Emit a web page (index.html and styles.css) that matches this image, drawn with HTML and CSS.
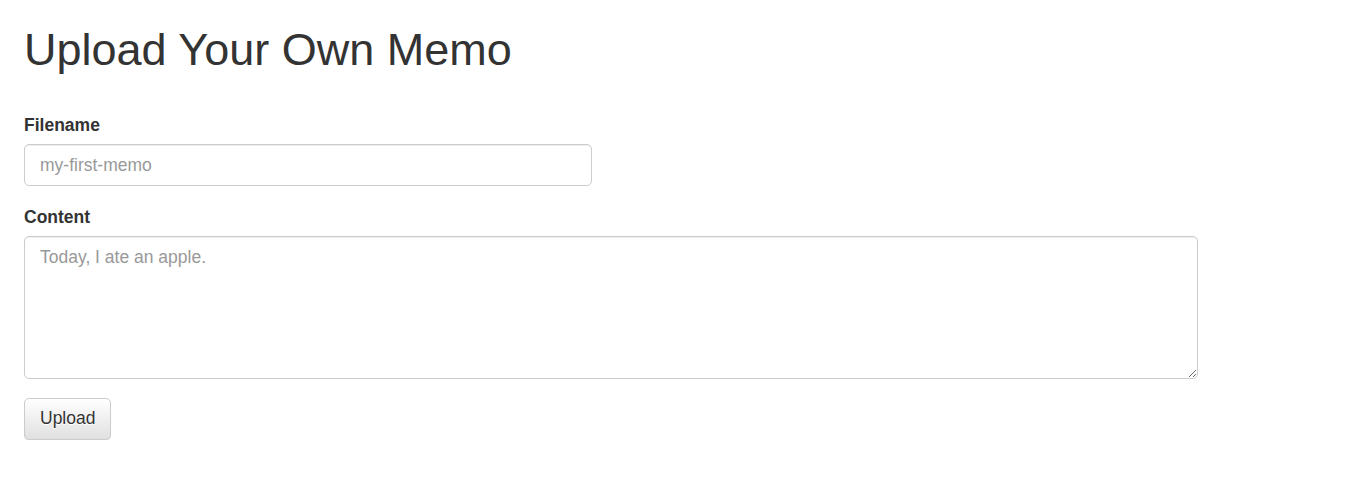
FILE: index.html
```html
<!DOCTYPE html>
<html>
<head>
<meta charset="utf-8">
<link rel="stylesheet" href="styles.css">
</head>
<body>
<div class="page">
  <h1 class="title">Upload Your Own Memo</h1>
  <form class="memo-form">
    <div class="form-group">
      <label class="field-label" for="filename">Filename</label>
      <input class="field input-short" id="filename" type="text" placeholder="my-first-memo">
    </div>
    <div class="form-group">
      <label class="field-label" for="content">Content</label>
      <textarea class="field textarea" id="content" rows="5" placeholder="Today, I ate an apple."></textarea>
    </div>
    <button class="btn" type="button">Upload</button>
  </form>
</div>
</body>
</html>
```

FILE: styles.css
```css
html, body {
  margin: 0;
  padding: 0;
  background: #fff;
}
body {
  font-family: "Liberation Sans", Arial, sans-serif;
  font-size: 17.5px;
  line-height: 25px;
  color: #333;
}
.page {
  padding: 0 24px;
}
.title {
  font-size: 45px;
  line-height: 49.5px;
  font-weight: 500;
  margin: 25px 0 0;
  color: #333;
}
.memo-form {
  padding-top: 38px;
  width: 1174px;
}
.form-group {
  margin-bottom: 18.75px;
}
.field-label {
  display: block;
  font-weight: bold;
  margin-bottom: 6.25px;
  font-size: 17.5px;
  line-height: 25px;
}
.field {
  display: block;
  box-sizing: border-box;
  width: 100%;
  padding: 7.5px 15px;
  font-family: "Liberation Sans", Arial, sans-serif;
  font-size: 17.5px;
  line-height: 25px;
  color: #555;
  background: #fff;
  border: 1.25px solid #ccc;
  border-radius: 5px;
  box-shadow: inset 0 1px 1px rgba(0,0,0,.075);
  margin: 0;
}
.field::placeholder {
  color: #999;
  opacity: 1;
}
.input-short {
  width: 568px;
  height: 42.5px;
}
.textarea {
  height: 142.5px;
  resize: vertical;
}
.btn {
  display: inline-block;
  box-sizing: border-box;
  height: 42.5px;
  padding: 7.5px 15px;
  font-family: "Liberation Sans", Arial, sans-serif;
  font-size: 17.5px;
  line-height: 25px;
  color: #333;
  background-color: #e0e0e0;
  background-image: linear-gradient(to bottom, #fff 0, #e0e0e0 100%);
  border: 1.25px solid #ccc;
  border-radius: 5px;
  text-shadow: 0 1px 0 #fff;
  box-shadow: inset 0 1px 0 rgba(255,255,255,.15), 0 1px 1px rgba(0,0,0,.075);
  cursor: pointer;
}
```
